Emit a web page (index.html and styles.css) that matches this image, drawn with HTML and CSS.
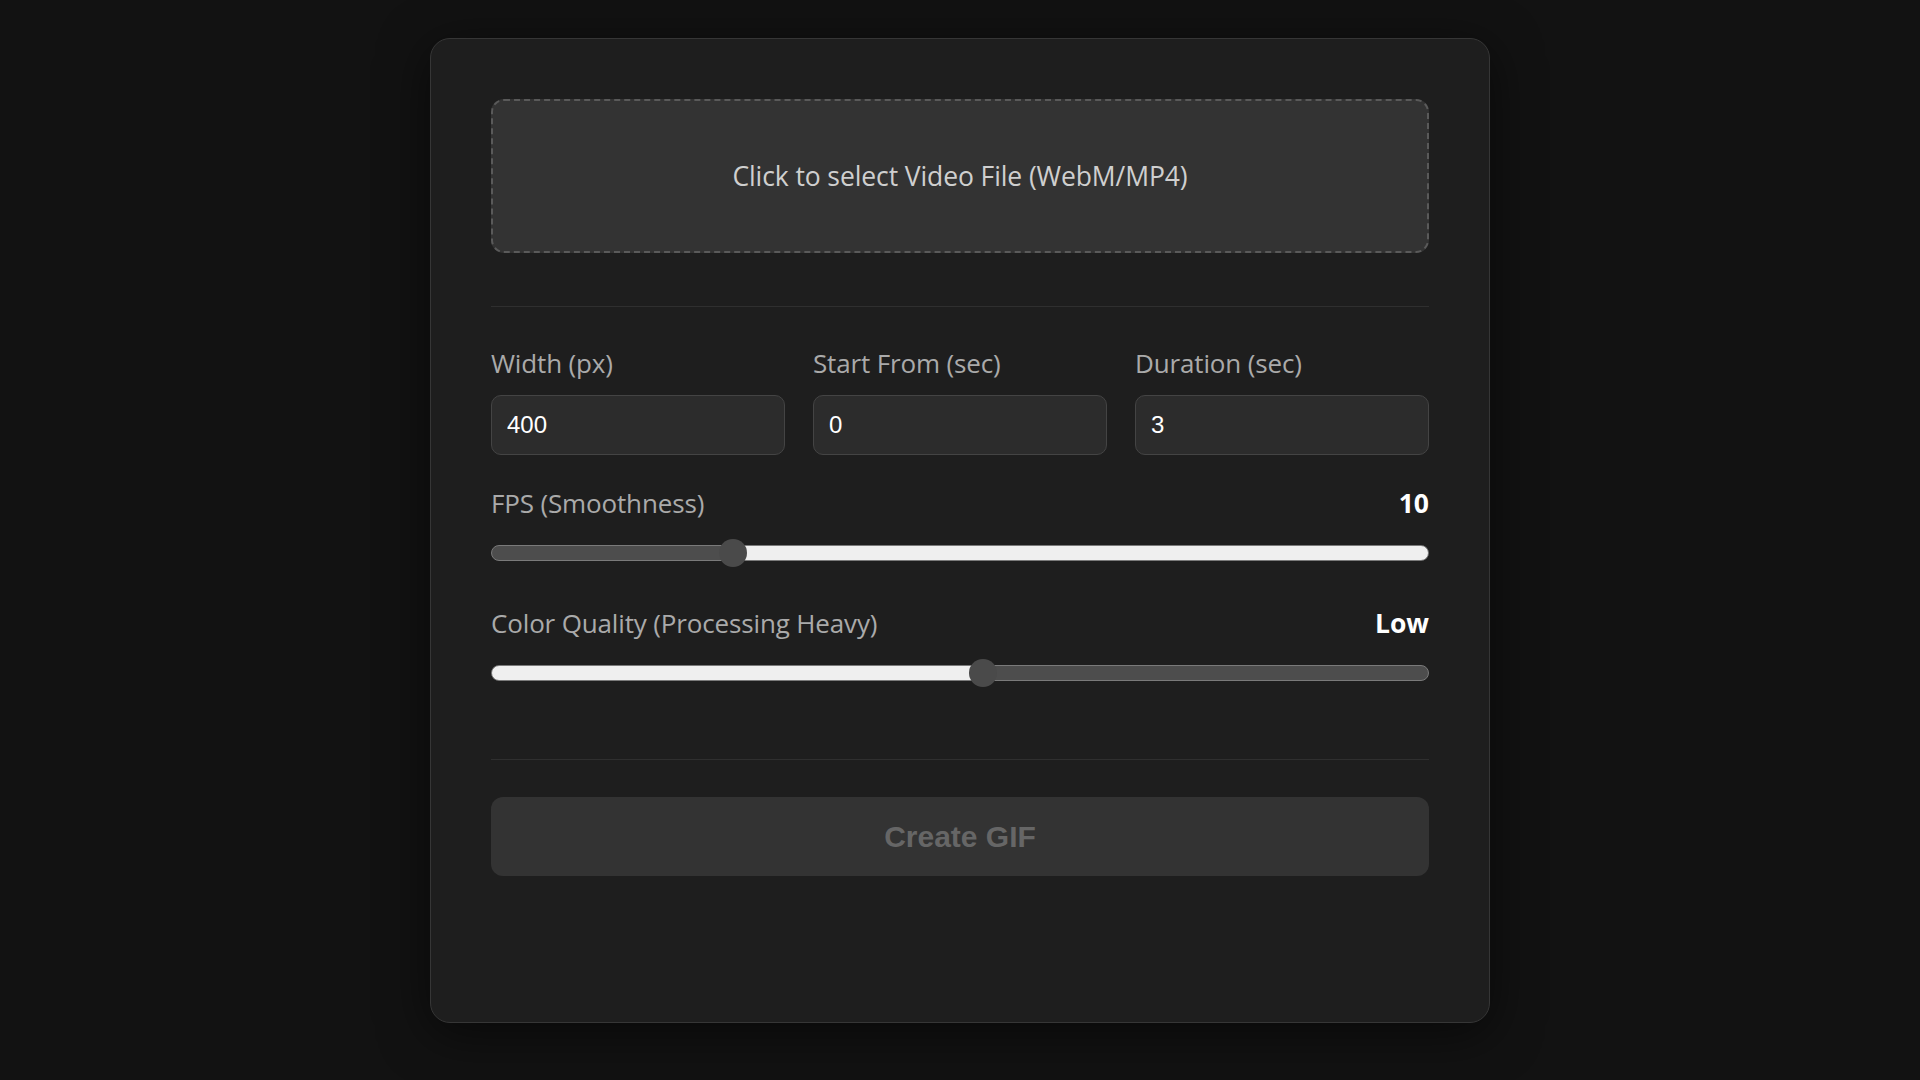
FILE: index.html
```html
<!DOCTYPE html>
<html lang="en">
<head>
<meta charset="utf-8">
<title>Video to GIF</title>
<link rel="stylesheet" href="styles.css">
</head>
<body>
  <main class="card">
    <label class="dropzone">
      <span class="dropzone-text">Click to select Video File (WebM/MP4)</span>
    </label>

    <section class="settings">
      <div class="field-row">
        <div class="field">
          <label class="label">Width (px)</label>
          <input class="text-input" type="text" value="400">
        </div>
        <div class="field">
          <label class="label">Start From (sec)</label>
          <input class="text-input" type="text" value="0">
        </div>
        <div class="field">
          <label class="label">Duration (sec)</label>
          <input class="text-input" type="text" value="3">
        </div>
      </div>

      <div class="slider-group">
        <div class="slider-head">
          <span class="label">FPS (Smoothness)</span>
          <span class="value">10</span>
        </div>
        <input class="range range-fps" type="range" min="0" max="100" step="0.5" value="25" style="--fill: 25.8%">
      </div>

      <div class="slider-group">
        <div class="slider-head">
          <span class="label">Color Quality (Processing Heavy)</span>
          <span class="value">Low</span>
        </div>
        <input class="range range-quality" type="range" min="0" max="100" step="0.5" value="52.5" style="--fill: 52.5%">
      </div>
    </section>

    <div class="actions">
      <button class="create-btn" disabled>Create GIF</button>
    </div>
    <div class="status"></div>
  </main>
</body>
</html>
```
FILE: styles.css
```css
* {
  box-sizing: border-box;
}

html, body {
  margin: 0;
  padding: 0;
}

body {
  background: #121212;
  font-family: "Open Sans", "Noto Sans", sans-serif;
  color: #aaa;
  min-height: 1080px;
}

.card {
  width: 1060px;
  margin: 38px auto 0;
  padding: 60px;
  background: #1e1e1e;
  border: 1px solid #363636;
  border-radius: 20px;
  box-shadow: 0 10px 50px rgba(0, 0, 0, 0.55);
}

.dropzone {
  display: flex;
  align-items: center;
  justify-content: center;
  height: 154px;
  background: #333;
  border: 2px dashed #5a5a5a;
  border-radius: 13px;
  cursor: pointer;
}

.dropzone-text {
  font-size: 26.5px;
  color: #cfcfcf;
  letter-spacing: -0.1px;
}

.settings {
  margin-top: 53px;
  padding-top: 38px;
  border-top: 1px solid #2f2f2f;
}

.field-row {
  display: grid;
  grid-template-columns: repeat(3, 1fr);
  gap: 28px;
}

.field {
  display: flex;
  flex-direction: column;
  gap: 14px;
}

.label {
  font-size: 26px;
  line-height: 36px;
  color: #aaa;
  letter-spacing: -0.15px;
}

.text-input {
  height: 60px;
  width: 100%;
  padding: 0 15px;
  background: #2c2c2c;
  border: 1px solid #444;
  border-radius: 10px;
  color: #fff;
  font-family: "Liberation Sans", Arial, sans-serif;
  font-size: 24px;
  outline: none;
}

.slider-group {
  display: flex;
  flex-direction: column;
  gap: 18px;
  margin-top: 30px;
}

.slider-group + .slider-group {
  margin-top: 38px;
}

.slider-head {
  display: flex;
  justify-content: space-between;
  align-items: baseline;
}

.value {
  font-size: 26.5px;
  line-height: 36px;
  font-weight: 700;
  color: #fff;
}

.range {
  -webkit-appearance: none;
  appearance: none;
  display: block;
  width: 100%;
  height: 28px;
  margin: 0;
  background: transparent;
}

.range::-webkit-slider-runnable-track {
  height: 16px;
  border-radius: 8px;
  border: 1px solid #7a7a7a;
}

.range-fps::-webkit-slider-runnable-track {
  background: linear-gradient(to right, #4d4d4d 0, #4d4d4d var(--fill), #efefef var(--fill), #efefef 100%);
}

.range-quality::-webkit-slider-runnable-track {
  background: linear-gradient(to right, #efefef 0, #efefef var(--fill), #4d4d4d var(--fill), #4d4d4d 100%);
}

.range::-webkit-slider-thumb {
  -webkit-appearance: none;
  appearance: none;
  width: 28px;
  height: 28px;
  margin-top: -7px;
  border-radius: 50%;
  background: #4a4a4a;
  border: none;
}

.actions {
  margin-top: 72px;
  padding-top: 37px;
  border-top: 1px solid #2f2f2f;
}

.create-btn {
  display: block;
  width: 100%;
  height: 79px;
  background: #333;
  border: none;
  border-radius: 12px;
  color: #666;
  font-family: "Liberation Sans", Arial, sans-serif;
  font-size: 30px;
  font-weight: 700;
}

.status {
  height: 86px;
}
```
